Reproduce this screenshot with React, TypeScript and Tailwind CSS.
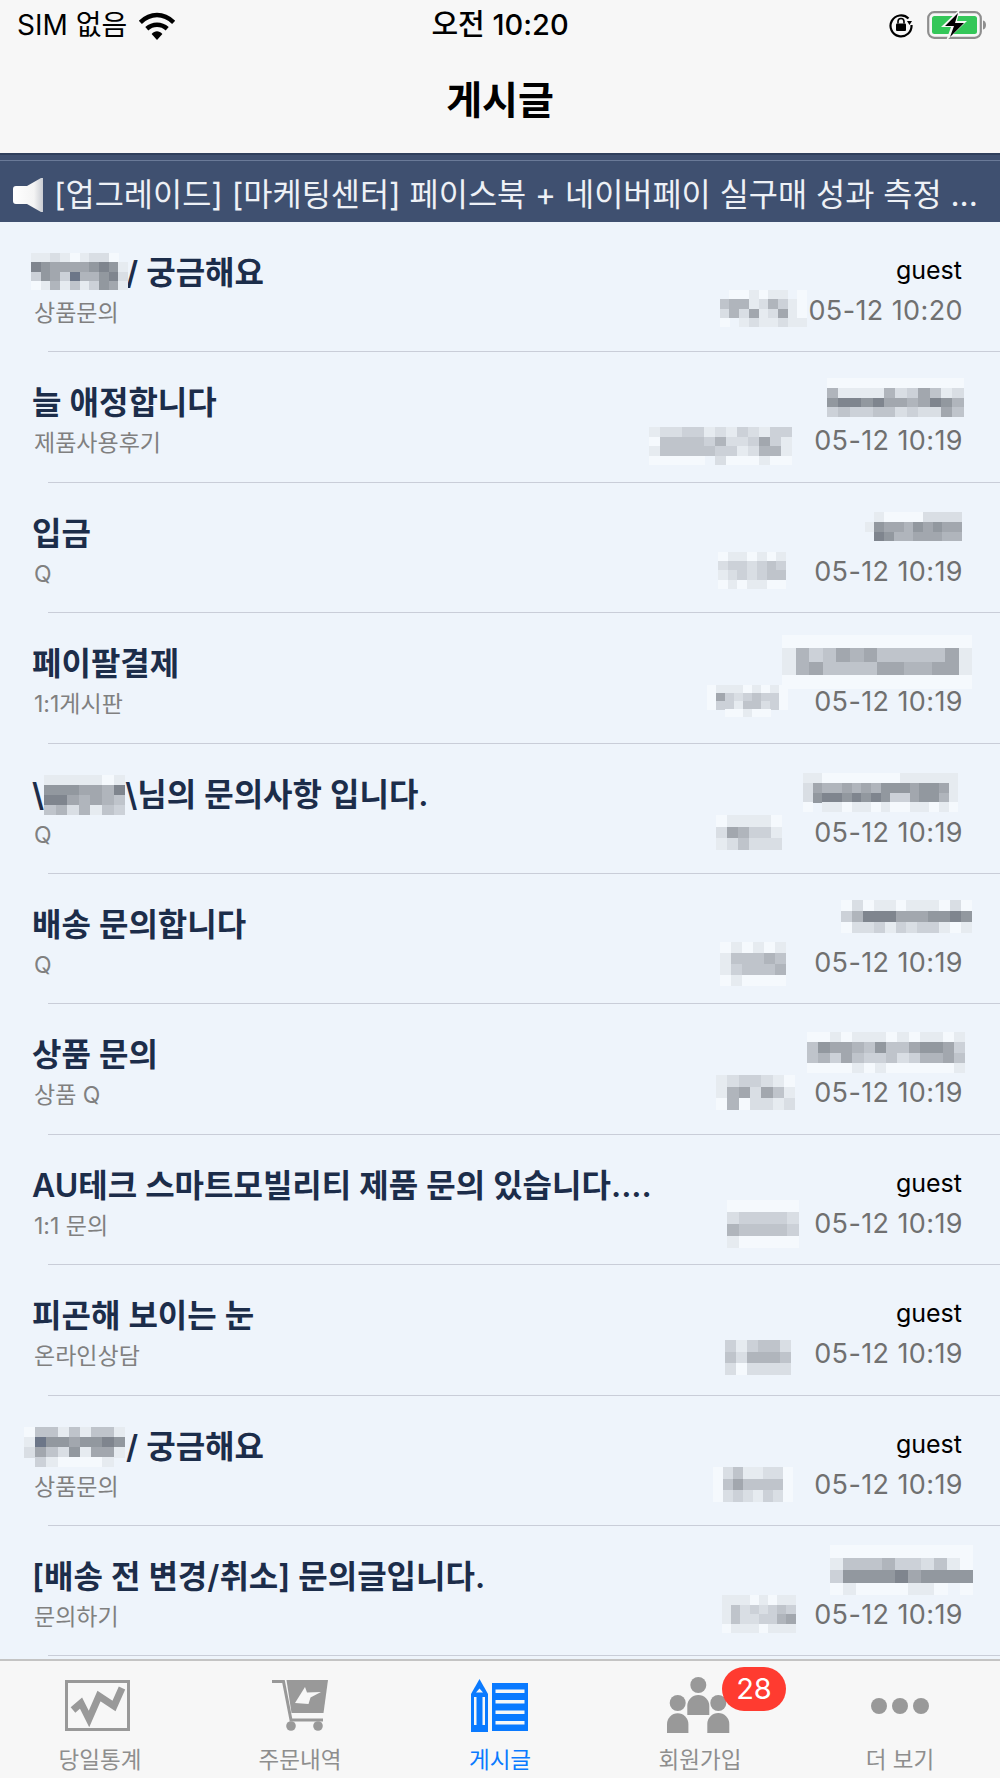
import React from "react";

type Patch = { x: number; y: number; cw: number; ch: number; rows: string[] };

type Post = {
  title: React.ReactNode;
  sub: string;
  guest?: boolean;
  date: string;
  patches: Patch[];
};

// mosaic shades, light to dark
const SHADES: Record<string, string> = {
  w: "#f5f9fd",
  "1": "#e6ebf0",
  "2": "#d9dee4",
  "3": "#ccd1d8",
  "4": "#bfc4cb",
  "5": "#b0b5bc",
  "6": "#a2a7ae",
  "7": "#92989f",
  "8": "#7f858e",
  "9": "#6c7688",
};

function Mosaic({ patch, rowTop }: { patch: Patch; rowTop: number }) {
  const cols = patch.rows[0].length;
  const w = cols * patch.cw;
  const h = patch.rows.length * patch.ch;
  return (
    <svg
      className="absolute"
      style={{ left: patch.x, top: patch.y - rowTop }}
      width={w}
      height={h}
      shapeRendering="crispEdges"
    >
      {patch.rows.map((row, r) =>
        row.split("").map((c, i) =>
          c === "." ? null : (
            <rect
              key={`${r}-${i}`}
              x={i * patch.cw}
              y={r * patch.ch}
              width={patch.cw + 0.5}
              height={patch.ch + 0.5}
              fill={SHADES[c]}
            />
          )
        )
      )}
    </svg>
  );
}

const posts: Post[] = [
  {
    title: (
      <>
        <span className="inline-block w-[94px]" />/ 궁금해요
      </>
    ),
    sub: "상품문의",
    guest: true,
    date: "05-12 10:20",
    patches: [
      { x: 31, y: 253, cw: 9.7, ch: 9.3, rows: ["1121w122w.", "8766667871", "3763955782", "w151413761"] },
      { x: 710, y: 290, cw: 9.7, ch: 9.3, rows: ["..ww1w11.w", ".45512531w", ".25261261w", ".w.1211211"] },
    ],
  },
  {
    title: "늘 애정합니다",
    sub: "제품사용후기",
    date: "05-12 10:19",
    patches: [
      { x: 827, y: 378, cw: 11.4, ch: 9.8, rows: ["wwwwwwwwwwww", "511115236412", "788786656875", "343344232264"] },
      { x: 649, y: 427, cw: 11, ch: 9.6, rows: ["1223312132133", "w444435223631", "1444443312551", "wwwww.2www1ww"] },
    ],
  },
  {
    title: "입금",
    sub: "Q",
    date: "05-12 10:19",
    patches: [
      { x: 855, y: 512, cw: 9.7, ch: 9.8, rows: ["..1wwww2222", ".1766576766", "..875566655"] },
      { x: 718, y: 552, cw: 9.7, ch: 9.2, rows: ["w11w1w1", "2332343", "1232344", "w1w11ww"] },
    ],
  },
  {
    title: "페이팔결제",
    sub: "1:1게시판",
    date: "05-12 10:19",
    patches: [
      { x: 782, y: 635, cw: 13.6, ch: 13.4, rows: ["wwwwwwwwwwwwww", "15346564444461", "15644446655661", "wwwwwwwwwwwwww"] },
      { x: 707, y: 685, cw: 9, ch: 8, rows: ["w111w1w1w", "w6323433w", "w3314423w", "..ww1ww.."] },
    ],
  },
  {
    title: (
      <>
        \<span className="inline-block w-[81px]" />\님의 문의사항 입니다.
      </>
    ),
    sub: "Q",
    date: "05-12 10:19",
    patches: [
      { x: 44, y: 775, cw: 11.6, ch: 10, rows: ["11111w1", "7776658", "8865654", "4525143"] },
      { x: 803, y: 773, cw: 9.7, ch: 9.8, rows: ["11wwwwwwww111111", "2655656577767761", "2788787873367751", "w.11w11w1ww11w1w"] },
      { x: 716, y: 815, cw: 11, ch: 11.6, rows: ["w1111w", "265331", "124222"] },
    ],
  },
  {
    title: "배송 문의합니다",
    sub: "Q",
    date: "05-12 10:19",
    patches: [
      { x: 841, y: 900, cw: 10.9, ch: 11, rows: ["w2w11w111w2w", "358886667787", "w223132331w1"] },
      { x: 720, y: 942, cw: 11, ch: 11, rows: ["w1w1w1", "144454", "134445", "w1wwww"] },
    ],
  },
  {
    title: "상품 문의",
    sub: "상품 Q",
    date: "05-12 10:19",
    patches: [
      { x: 807, y: 1032, cw: 11.3, ch: 10.3, rows: ["ww1w111w1w11w1", "47665474467763", "45364334235564", "wwww1w1wwwwww1"] },
      { x: 716, y: 1075, cw: 11.3, ch: 11.6, rows: ["123321w", "1562641", "w5w2212"] },
    ],
  },
  {
    title: "AU테크 스마트모빌리티 제품 문의 있습니다....",
    sub: "1:1 문의",
    guest: true,
    date: "05-12 10:19",
    patches: [
      { x: 727, y: 1200, cw: 12, ch: 12, rows: ["wwwwww", "233332", "544443", "1wwwww"] },
    ],
  },
  {
    title: "피곤해 보이는 눈",
    sub: "온라인상담",
    guest: true,
    date: "05-12 10:19",
    patches: [
      { x: 725, y: 1340, cw: 11, ch: 11.6, rows: ["313442", "425554", "2w2222"] },
    ],
  },
  {
    title: (
      <>
        <span className="inline-block w-[94px]" />/ 궁금해요
      </>
    ),
    sub: "상품문의",
    guest: true,
    date: "05-12 10:19",
    patches: [
      { x: 24, y: 1427, cw: 11.2, ch: 10, rows: ["w44141441", "197767787", "264271661", ".31wwww1."] },
      { x: 713, y: 1467, cw: 10, ch: 11.6, rows: ["w241122w", "w464444w", "w232132w"] },
    ],
  },
  {
    title: "[배송 전 변경/취소] 문의글입니다.",
    sub: "문의하기",
    date: "05-12 10:19",
    patches: [
      { x: 830, y: 1545, cw: 13, ch: 12.6, rows: ["wwwwwwwwwww", "1444533241w", "37777867777", "w1wwww11w.w"] },
      { x: 722, y: 1595, cw: 9.2, ch: 9.5, rows: ["111w1w11", "14232343", "14223356", "w111w111"] },
    ],
  },
];

function Wifi() {
  return (
    <svg width="38" height="29" viewBox="0 0 35 27" className="ml-[11px]">
      <path d="M2 10.5C11.5 1.5 23.5 1.5 33 10.5" fill="none" stroke="#000" strokeWidth="4.2" />
      <path d="M8 16.5C13.5 11.5 21.5 11.5 27 16.5" fill="none" stroke="#000" strokeWidth="4.2" />
      <path d="M12.5 21.5C15.5 18 19.5 18 22.5 21.5L17.5 27Z" fill="#000" />
    </svg>
  );
}

function StatusIcons() {
  return (
    <div className="flex items-center">
      <svg width="26" height="26" viewBox="0 0 26 26" className="mr-[13px]">
        <path d="M20.5 6.5A10.5 10.5 0 1 0 23.5 13" fill="none" stroke="#000" strokeWidth="2.2" />
        <path d="M19 13l5 0 -2.5 -4z" fill="#000" transform="rotate(180 21.5 11)" />
        <rect x="8" y="11.5" width="10" height="7.5" rx="1" fill="#000" />
        <path d="M10 11.5V9.5a3 3 0 0 1 6 0V11.5" fill="none" stroke="#000" strokeWidth="1.6" />
      </svg>
      <svg width="60" height="28" viewBox="0 0 60 28">
        <rect x="1.2" y="1.2" width="52.6" height="25.6" rx="6" fill="none" stroke="#8e8e8e" strokeWidth="2.2" />
        <rect x="5" y="5" width="45" height="18" rx="2.5" fill="#34c759" />
        <path d="M56 9.5c2 .5 3 2.200 3 4.500s-1 4-3 4.500z" fill="#8e8e8e" />
        <path d="M33 -2L14 16h10l-5 14L40 10h-10z" fill="#f7f7f7" />
        <path d="M31 2L18 15h9l-4 11L37 12h-9z" fill="#000" />
      </svg>
    </div>
  );
}

function ChartIcon() {
  return (
    <svg width="66" height="52" viewBox="0 0 66 52" className="mr-[4px]">
      <rect x="1.500" y="1.500" width="62" height="48" fill="none" stroke="#999" strokeWidth="3" />
      <path d="M8 30L16 23L24 39L34 16L49 26L57 8" fill="none" stroke="#999" strokeWidth="7" />
    </svg>
  );
}

function CartIcon() {
  return (
    <svg width="58" height="52" viewBox="0 0 58 52">
      <path d="M1 1.500H12.500L20 40H52" fill="none" stroke="#999" strokeWidth="3" />
      <path d="M15.500 0H57L52.500 33H20.500Z" fill="#999" />
      <path d="M24 23L34 7L36 12.500L50 12L39.500 17.500L37.500 24Z" fill="#f7f7f7" />
      <circle cx="20" cy="46" r="4.800" fill="#999" />
      <circle cx="47" cy="46" r="4.800" fill="#999" />
    </svg>
  );
}

function BoardIcon() {
  return (
    <svg width="58" height="54" viewBox="0 0 58 54">
      <path d="M8.500 0L17 15V53H0V15Z" fill="#0a7aff" />
      <path d="M5 13.500L8.500 9.500L12 13.500Z" fill="#f7f7f7" />
      <rect x="3" y="18" width="2.500" height="28" fill="#f7f7f7" />
      <rect x="11.500" y="18" width="2.500" height="28" fill="#f7f7f7" />
      <rect x="21" y="4" width="36" height="48" fill="#0a7aff" />
      <rect x="24.500" y="10.500" width="29" height="3.500" fill="#f7f7f7" />
      <rect x="24.500" y="21" width="29" height="3.500" fill="#f7f7f7" />
      <rect x="24.500" y="31.500" width="29" height="3.500" fill="#f7f7f7" />
      <rect x="24.500" y="42" width="29" height="3.500" fill="#f7f7f7" />
    </svg>
  );
}

function PeopleIcon() {
  return (
    <svg width="63" height="57" viewBox="0 0 63 57" className="mr-[4px]">
      <circle cx="31.300" cy="8" r="8" fill="#999" />
      <path d="M20.300 38V29a11 11 0 0 1 22 0V38Z" fill="#999" />
      <circle cx="10.700" cy="26" r="8" fill="#999" />
      <path d="M0 56V47a10.700 10.700 0 0 1 21.400 0V56Z" fill="#999" />
      <circle cx="51.300" cy="26" r="8" fill="#999" />
      <path d="M40.300 56V47a11 11 0 0 1 22 0V56Z" fill="#999" />
    </svg>
  );
}

function DotsIcon() {
  return (
    <svg width="58" height="16" viewBox="0 0 58 16">
      <circle cx="8" cy="8" r="8" fill="#999" />
      <circle cx="29" cy="8" r="8" fill="#999" />
      <circle cx="50" cy="8" r="8" fill="#999" />
    </svg>
  );
}

function Row({ post, index }: { post: Post; index: number }) {
  const rowTop = 222 + index * 130.4;
  return (
    <div className="relative flex h-[130.4px] flex-col">
      <div className="flex flex-1 justify-between pl-[32px] pr-[37px]">
        <div className="pt-[31px]">
          <div className="text-[32px] leading-[40px] font-semibold whitespace-pre text-[#1c2d4a]">{post.title}</div>
          <div className="mt-[5px] pl-[2px] text-[23px] leading-[30px] text-[#808080]">{post.sub}</div>
        </div>
        <div className="flex flex-col items-end pt-[33px]">
          <div className="h-[30px] pr-[1px] text-[25px] leading-[30px] text-black">{post.guest ? "guest" : ""}</div>
          <div className="mt-[11px] text-[27px] leading-[30px] tracking-[0.4px] text-[#707070]">{post.date}</div>
        </div>
      </div>
      <div className="ml-[48px] h-px bg-[#c9cdd8]" />
      {post.patches.map((p, i) => (
        <Mosaic key={i} patch={p} rowTop={rowTop} />
      ))}
    </div>
  );
}

const tabs = [
  { label: "당일통계", icon: <ChartIcon /> },
  { label: "주문내역", icon: <CartIcon /> },
  { label: "게시글", icon: <BoardIcon />, active: true },
  { label: "회원가입", icon: <PeopleIcon />, badge: "28" },
  { label: "더 보기", icon: <DotsIcon /> },
];

export default function App() {
  return (
    <div className="flex h-[1778px] w-[1000px] flex-col overflow-hidden bg-[#eef4fb] font-['Inter','Noto_Sans_CJK_KR',sans-serif]">
      <div className="h-[153px] shrink-0 bg-[#f7f7f7]">
        <div className="relative flex h-[50px] items-center justify-between pl-[17px] pr-[13px]">
          <div className="flex items-center text-[28px] text-black">
            SIM 없음
            <Wifi />
          </div>
          <div className="absolute left-0 right-0 text-center text-[29px] font-medium text-black">오전 10:20</div>
          <StatusIcons />
        </div>
        <div className="flex h-[100px] items-center justify-center text-[39px] font-semibold text-black">게시글</div>
      </div>

      <div className="h-[69px] shrink-0 border-t-2 border-t-[#2f3f5c] bg-[#3f5070]">
        <div className="mt-[5px] h-px bg-[#6a7a98]" />
        <div className="flex h-[61px] items-center pl-[13px] pt-[7px]">
          <svg width="30" height="34" viewBox="0 0 30 34" className="mr-[11px] shrink-0">
            <defs>
              <linearGradient id="spk" x1="0" x2="1" y1="0" y2="0">
                <stop offset="0" stopColor="#ffffff" />
                <stop offset="0.7" stopColor="#f4f4f4" />
                <stop offset="1" stopColor="#c9ccd2" />
              </linearGradient>
            </defs>
            <path d="M3 8H14L28 0H30V34H28L14 26H3A3 3 0 0 1 0 23V11A3 3 0 0 1 3 8Z" fill="url(#spk)" />
          </svg>
          <div className="whitespace-pre text-[31.7px] text-[#eef1f6]">
            [업그레이드] [마케팅센터] 페이스북 + 네이버페이 실구매 성과 측정 ...
          </div>
        </div>
      </div>

      <div className="flex-1 overflow-hidden">
        {posts.map((post, i) => (
          <Row key={i} post={post} index={i} />
        ))}
      </div>

      <div className="grid h-[119px] shrink-0 grid-cols-5 border-t-2 border-t-[#c4c4c4] bg-[#f7f7f7]">
        {tabs.map((tab) => (
          <div key={tab.label} className="relative flex flex-col items-center">
            <div className="flex h-[82px] items-center justify-center pt-[7px]">{tab.icon}</div>
            <div className={`mt-[2px] text-[22.5px] leading-[30px] ${tab.active ? "text-[#0a7aff]" : "text-[#8e8e8e]"}`}>{tab.label}</div>
            {tab.badge && (
              <div className="absolute left-[122px] top-[6px] flex h-[44px] w-[64px] items-center justify-center rounded-full bg-[#ff3b30] text-[29px] text-white">
                {tab.badge}
              </div>
            )}
          </div>
        ))}
      </div>
    </div>
  );
}
